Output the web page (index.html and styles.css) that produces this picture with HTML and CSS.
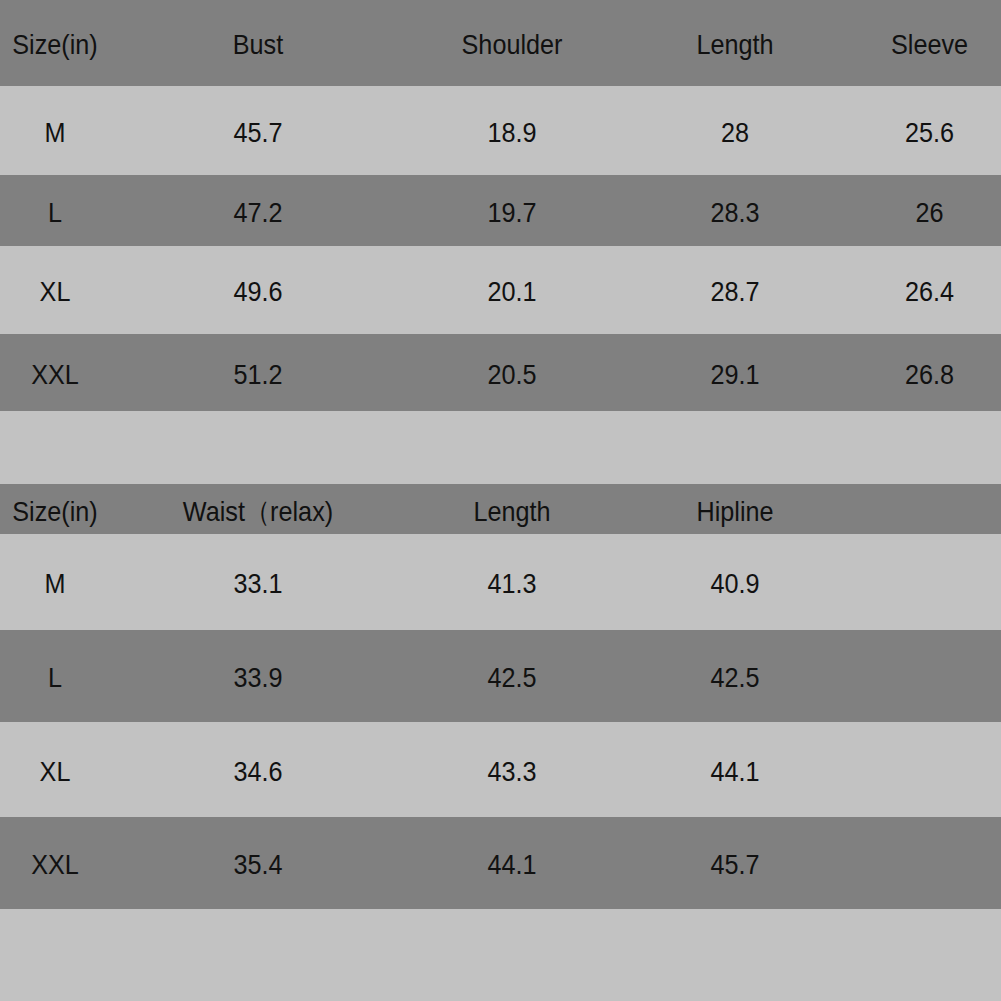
FILE: index.html
```html
<!DOCTYPE html>
<html>
<head>
<meta charset="utf-8">
<link rel="stylesheet" href="styles.css">
</head>
<body>
<div class="sheet">
  <div class="row dark h86 top">
    <div class="cell">Size(in)</div><div class="cell">Bust</div><div class="cell">Shoulder</div><div class="cell">Length</div><div class="cell">Sleeve</div>
  </div>
  <div class="row light h89">
    <div class="cell">M</div><div class="cell">45.7</div><div class="cell">18.9</div><div class="cell">28</div><div class="cell">25.6</div>
  </div>
  <div class="row dark h71">
    <div class="cell">L</div><div class="cell">47.2</div><div class="cell">19.7</div><div class="cell">28.3</div><div class="cell">26</div>
  </div>
  <div class="row light h88">
    <div class="cell">XL</div><div class="cell">49.6</div><div class="cell">20.1</div><div class="cell">28.7</div><div class="cell">26.4</div>
  </div>
  <div class="row dark h77">
    <div class="cell">XXL</div><div class="cell">51.2</div><div class="cell">20.5</div><div class="cell">29.1</div><div class="cell">26.8</div>
  </div>
  <div class="row light h73"></div>
  <div class="row dark h50">
    <div class="cell">Size(in)</div><div class="cell">Waist（relax)</div><div class="cell">Length</div><div class="cell">Hipline</div><div class="cell"></div>
  </div>
  <div class="row light h96">
    <div class="cell">M</div><div class="cell">33.1</div><div class="cell">41.3</div><div class="cell">40.9</div><div class="cell"></div>
  </div>
  <div class="row dark h92">
    <div class="cell">L</div><div class="cell">33.9</div><div class="cell">42.5</div><div class="cell">42.5</div><div class="cell"></div>
  </div>
  <div class="row light h95">
    <div class="cell">XL</div><div class="cell">34.6</div><div class="cell">43.3</div><div class="cell">44.1</div><div class="cell"></div>
  </div>
  <div class="row dark h92">
    <div class="cell">XXL</div><div class="cell">35.4</div><div class="cell">44.1</div><div class="cell">45.7</div><div class="cell"></div>
  </div>
  <div class="row light h92"></div>
</div>
</body>
</html>
```

FILE: styles.css
```css
html, body {
  margin: 0;
  padding: 0;
  background: #c2c2c2;
  overflow: hidden;
}
.sheet {
  width: 1001px;
  height: 1001px;
  overflow: hidden;
  display: flex;
  flex-direction: column;
  font-family: "Liberation Sans", Arial, sans-serif;
  font-size: 28px;
  color: #111111;
}
.row {
  display: grid;
  grid-template-columns: 110px 296px 212px 234px 155px;
  align-items: center;
  padding-top: 4px;
  box-sizing: border-box;
}
.row.top { padding-top: 4px; }
.dark { background: #808080; }
.light { background: #c2c2c2; }
.cell {
  text-align: center;
  white-space: nowrap;
  line-height: 1;
  transform: scaleX(0.9);
}
.h50 { height: 50px; padding-top: 5px; }
.h71 { height: 71px; }
.h73 { height: 73px; }
.h77 { height: 77px; }
.h86 { height: 86px; }
.h88 { height: 88px; }
.h89 { height: 89px; }
.h92 { height: 92px; }
.h95 { height: 95px; }
.h96 { height: 96px; }
```
